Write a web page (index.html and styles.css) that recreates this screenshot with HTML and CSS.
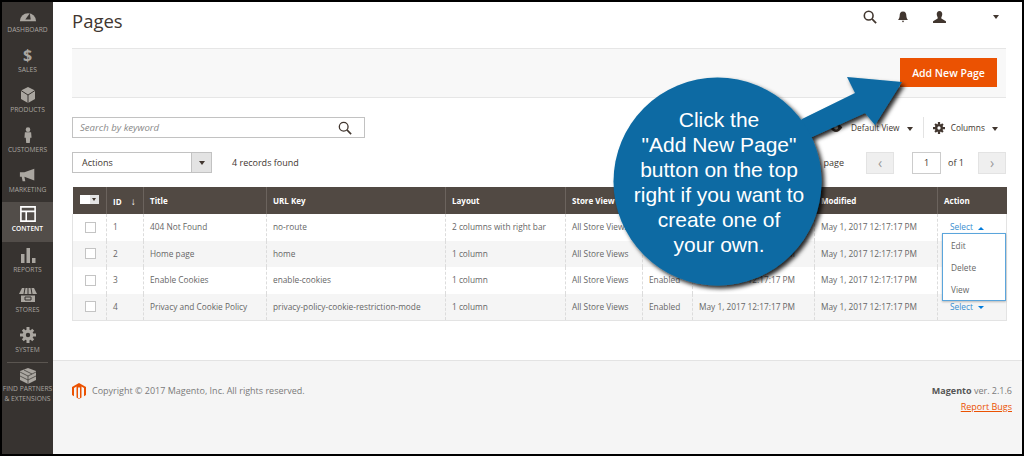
FILE: index.html
```html
<!DOCTYPE html>
<html lang="en">
<head>
<meta charset="utf-8">
<title>Pages</title>
<link rel="stylesheet" href="styles.css">
</head>
<body>
<div class="frame">
  <nav class="side">
    <a class="nav-item"><svg viewBox="0 0 20 16" class="ni"><path d="M1 15a9 9 0 1 1 18 0z" fill="#aaa6a0"/><path d="M7 13l5-7 1 7z" fill="#373330"/></svg><span>DASHBOARD</span></a>
    <a class="nav-item"><span class="dollar">$</span><span>SALES</span></a>
    <a class="nav-item"><svg viewBox="0 0 16 16" class="ni"><path d="M8 0l7 3.500v8.500l-7 4-7-4V3.500z" fill="#aaa6a0"/><path d="M8 8v8M1 3.500L8 8l7-4.500" stroke="#373330" fill="none"/></svg><span>PRODUCTS</span></a>
    <a class="nav-item"><svg viewBox="0 0 16 18" class="ni"><circle cx="8" cy="3" r="2.600" fill="#aaa6a0"/><path d="M4.500 6h7l.5 6h-1.500l-.5 6H6l-.5-6H4z" fill="#aaa6a0"/></svg><span>CUSTOMERS</span></a>
    <a class="nav-item"><svg viewBox="0 0 20 16" class="ni"><path d="M1 5h5l11-4v13L6 10l1 5H4L3 10H1z" fill="#aaa6a0"/></svg><span>MARKETING</span></a>
    <a class="nav-item active"><svg viewBox="0 0 18 18" class="ni"><path d="M1 1h16v16H1zM1 6h16M7 6v11" fill="none" stroke="#fff" stroke-width="1.800"/></svg><span>CONTENT</span></a>
    <a class="nav-item"><svg viewBox="0 0 16 16" class="ni"><path d="M1 7h3.500v9H1zM6.500 1H10v15H6.500zM12 11h3.500v5H12z" fill="#aaa6a0"/></svg><span>REPORTS</span></a>
    <a class="nav-item"><svg viewBox="0 0 18 16" class="ni"><path d="M3 1h12l3 6H0z" fill="#aaa6a0"/><path d="M2 8.500h14V15H2z" fill="#aaa6a0"/><path d="M6 1L5 7M9 1v6M12 1l1 6M6 10h6v3H6z" stroke="#373330" fill="none"/></svg><span>STORES</span></a>
    <a class="nav-item"><svg viewBox="0 0 16 16" class="ni"><circle cx="8" cy="8" r="3.800" fill="none" stroke="#aaa6a0" stroke-width="3.200"/><path d="M6.500 0h3v3h-3zM6.500 13h3v3h-3zM0 6.500h3v3H0zM13 6.500h3v3h-3zM1.800 3.800l2-2 2 2-2 2zM10.200 3.800l2-2 2 2-2 2zM1.800 12.200l2-2 2 2-2 2zM10.200 12.200l2-2 2 2-2 2z" fill="#aaa6a0"/></svg><span>SYSTEM</span></a>
    <a class="nav-item partners"><svg viewBox="0 0 16 16" class="ni"><path d="M8 0l8 3v9l-8 4-8-4V3z" fill="#aaa6a0"/><path d="M0 4l8 4 8-4M0 8l8 4 8-4M8 8v8M4 2l8 4" stroke="#373330" stroke-width=".7" fill="none"/></svg><span>FIND PARTNERS<br>&amp; EXTENSIONS</span></a>
  </nav>
  <div class="main">
    <main class="page">
      <header class="top">
        <h1>Pages</h1>
        <div class="tools">
          <svg class="t-search" viewBox="0 0 16 16"><circle cx="6.500" cy="6.500" r="5" fill="none" stroke="#41362f" stroke-width="1.800"/><path d="M10.200 10.200L15 15" stroke="#41362f" stroke-width="2"/></svg>
          <svg class="t-bell" viewBox="0 0 12 13"><path d="M6 0c3 0 4 2 4 5 0 2 1 4 2 5H0c1-1 2-3 2-5 0-3 1-5 4-5zM4.500 11h3L6 13z" fill="#41362f"/></svg>
          <svg class="t-user" viewBox="0 0 14 13"><path d="M7 0c2 0 3 1.500 3 3.500S8.500 7 9 8l5 3v2H0v-2l5-3c.500-1-1-2.500-1-4.500S5 0 7 0z" fill="#41362f"/></svg>
          <i class="caret"></i>
        </div>
      </header>
      <div class="actions-bar"><button class="primary">Add New Page</button></div>
      <div class="search-row">
        <div class="search"><em>Search by keyword</em><svg viewBox="0 0 16 16"><circle cx="6.500" cy="6.500" r="5" fill="none" stroke="#41362f" stroke-width="1.500"/><path d="M10.200 10.200L15 15" stroke="#41362f" stroke-width="1.800"/></svg></div>
        <div class="view-tools">
          <svg class="eye" viewBox="0 0 14 10"><path d="M0 5c2-3 4.500-5 7-5s5 2 7 5c-2 3-4.500 5-7 5S2 8 0 5z" fill="#41362f"/><circle cx="7" cy="5" r="2.300" fill="#fff"/></svg>
          <span class="view">Default View <i class="caret"></i></span>
          <span class="sep"></span>
          <svg class="gear" viewBox="0 0 16 16"><circle cx="8" cy="8" r="3.800" fill="none" stroke="#41362f" stroke-width="3.200"/><path d="M6.500 0h3v3h-3zM6.500 13h3v3h-3zM0 6.500h3v3H0zM13 6.500h3v3h-3zM1.800 3.800l2-2 2 2-2 2zM10.200 3.800l2-2 2 2-2 2zM1.800 12.200l2-2 2 2-2 2zM10.200 12.200l2-2 2 2-2 2z" fill="#41362f"/></svg>
          <span class="view">Columns <i class="caret"></i></span>
        </div>
      </div>
      <div class="action-row">
        <div class="select"><span>Actions</span><b><i class="caret"></i></b></div>
        <span class="records">4 records found</span>
        <div class="pager">
          <span class="per">page</span>
          <span class="pg-btn">&lsaquo;</span>
          <span class="pg-input">1</span>
          <span class="of">of 1</span>
          <span class="pg-btn">&rsaquo;</span>
        </div>
      </div>
      <div class="table-wrap">
        <table>
          <colgroup><col class="c1"><col class="c2"><col class="c3"><col class="c4"><col class="c5"><col class="c6"><col class="c7"><col class="c8"><col class="c9"><col class="c10"></colgroup>
          <thead>
            <tr>
              <th><span class="th-check"><u></u><b><i class="caret"></i></b></span></th>
              <th>ID <span class="arrow">&darr;</span></th><th>Title</th><th>URL Key</th><th>Layout</th><th>Store View</th><th>Status</th><th>Created</th><th>Modified</th><th>Action</th>
            </tr>
          </thead>
          <tbody>
            <tr><td><span class="cb"></span></td><td>1</td><td>404 Not Found</td><td>no-route</td><td>2 columns with right bar</td><td>All Store Views</td><td>Enabled</td><td>May 1, 2017 12:17:17 PM</td><td>May 1, 2017 12:17:17 PM</td>
              <td class="act"><a>Select <i class="up"></i></a>
                <div class="menu"><span>Edit</span><span>Delete</span><span>View</span></div></td></tr>
            <tr><td><span class="cb"></span></td><td>2</td><td>Home page</td><td>home</td><td>1 column</td><td>All Store Views</td><td>Enabled</td><td>May 1, 2017 12:17:17 PM</td><td>May 1, 2017 12:17:17 PM</td><td></td></tr>
            <tr><td><span class="cb"></span></td><td>3</td><td>Enable Cookies</td><td>enable-cookies</td><td>1 column</td><td>All Store Views</td><td>Enabled</td><td>May 1, 2017 12:17:17 PM</td><td>May 1, 2017 12:17:17 PM</td><td></td></tr>
            <tr><td><span class="cb"></span></td><td>4</td><td>Privacy and Cookie Policy</td><td>privacy-policy-cookie-restriction-mode</td><td>1 column</td><td>All Store Views</td><td>Enabled</td><td>May 1, 2017 12:17:17 PM</td><td>May 1, 2017 12:17:17 PM</td><td class="act"><a>Select <i class="down"></i></a></td></tr>
          </tbody>
        </table>
      </div>
    </main>
    <footer class="foot">
      <div class="copy">
        <svg viewBox="0 0 14 16"><path d="M7 0l7 4v8l-2 1.200V5L9.500 3.600V14.500L7 16l-2.500-1.500V3.600L2 5v8.200L0 12V4z" fill="#eb5202"/><path d="M6 4.500h2v10.300L7 15.400 6 14.800z" fill="#f5f5f5"/></svg>
        <span>Copyright &copy; 2017 Magento, Inc. All rights reserved.</span>
      </div>
      <div class="ver"><div><b>Magento</b> ver. 2.1.6</div><a>Report Bugs</a></div>
    </footer>
  </div>
  <div class="callout">
    <svg viewBox="0 0 1024 456" class="callout-art">
      <defs><filter id="sh" x="-20%" y="-20%" width="140%" height="140%"><feDropShadow dx="3" dy="3" stdDeviation="2" flood-color="#000" flood-opacity=".85"/></filter></defs>
      <g filter="url(#sh)" fill="#0a6aa3">
        <path d="M802 119L855 93 847 77 902 82 875 125 865 113 812 137 760 175z"/>
        <circle cx="717.500" cy="181.500" r="104"/>
      </g>
    </svg>
    <p class="callout-text">Click the<br>"Add New Page"<br>button on the top<br>right if you want to<br>create one of<br>your own.</p>
  </div>
</div>
</body>
</html>
```
FILE: styles.css
```css
* { box-sizing: border-box; }
html, body { margin: 0; padding: 0; background: #000; }
body { width: 1024px; height: 456px; overflow: hidden; font-family: "Open Sans", "Liberation Sans", sans-serif; color: #41362f; }
.frame { position: relative; display: flex; width: 1024px; height: 456px; padding: 2px; background: #000; overflow: hidden; }

.side { width: 51px; flex: none; background: #373330; display: flex; flex-direction: column; padding-top: 2px; }
.nav-item { height: 40px; flex: none; display: flex; flex-direction: column; align-items: center; justify-content: flex-start; color: #aaa6a0; font-size: 6.700px; line-height: 9px; text-align: center; white-space: nowrap; padding-top: 3px; gap: 2px; }
.nav-item.active { background: #524d49; color: #fff; font-weight: 600; height: 40px; margin: -2px 0 2px; padding-top: 4px; }
.ni { width: 18px; height: 16px; display: block; flex: none; }
.dollar { font-size: 16px; font-weight: 700; line-height: 16px; color: #aaa6a0; }
.partners { border-top: 1px solid #5a5550; margin: -2px 5px 0; height: 56px; padding-top: 5px; gap: 0; line-height: 10px; }

.main { flex: 1; min-width: 0; background: #fff; display: flex; flex-direction: column; }
.page { padding: 0 16px 0 19px; height: 358px; flex: none; }
.top { height: 46px; display: flex; align-items: flex-start; justify-content: space-between; }
h1 { margin: 4px 0 0; font-size: 18.500px; line-height: 30px; font-weight: 400; color: #41362f; }
.tools { display: flex; align-items: center; height: 30px; }
.t-search { width: 14px; height: 14px; margin-right: 21px; }
.t-bell { width: 10px; height: 12px; margin-right: 25px; }
.t-user { width: 13px; height: 12px; margin-right: 47px; }
.caret { display: inline-block; width: 0; height: 0; border-left: 3px solid transparent; border-right: 3px solid transparent; border-top: 4px solid #41362f; vertical-align: middle; }
.tools .caret { margin-right: 7px; }

.actions-bar { height: 50px; background: #f8f8f8; border-top: 1px solid #e6e6e6; border-bottom: 1px solid #e6e6e6; display: flex; justify-content: flex-end; align-items: center; padding: 0 9px 1px 0; }
.primary { width: 97px; height: 29px; background: #eb5202; border: 0; color: #fff; font: 600 10.500px "Open Sans", sans-serif; padding: 0; }

.search-row { display: flex; justify-content: space-between; align-items: center; height: 21px; margin-top: 19px; }
.search { width: 293px; height: 21px; border: 1px solid #c2c2c2; display: flex; align-items: center; justify-content: space-between; padding: 0 12px 0 7px; font-size: 9.600px; color: #8a8a8a; background: #fff; }
.search svg { width: 14px; height: 14px; }
.view-tools { display: flex; align-items: center; font-size: 8.300px; color: #41362f; padding-right: 8px; }
.view { white-space: nowrap; }
.view .caret { margin-left: 5px; }
.eye { width: 14px; height: 9px; margin-right: 8px; }
.sep { width: 1px; height: 21px; background: #e3e3e3; margin: 0 9px 0 10px; }
.gear { width: 12px; height: 12px; margin-right: 6px; }

.action-row { display: flex; align-items: center; height: 21px; margin-top: 14px; font-size: 9px; }
.select { width: 140px; height: 21px; border: 1px solid #c2c2c2; display: flex; justify-content: space-between; align-items: center; padding-left: 9px; color: #41362f; }
.select b { width: 20px; height: 19px; background: #e3e3e3; border-left: 1px solid #c2c2c2; display: flex; align-items: center; justify-content: center; }
.records { margin-left: 20px; }
.pager { margin-left: auto; display: flex; align-items: center; }
.per { margin-right: 22px; }
.pg-btn { width: 28px; height: 22px; background: #efefef; border: 1px solid #e3e3e3; color: #9a9a9a; display: flex; align-items: center; justify-content: center; font-size: 14px; }
.pg-input { width: 29px; height: 22px; border: 1px solid #ccc; display: flex; align-items: center; justify-content: center; margin: 0 7px 0 18px; }
.of { margin-right: 14px; }

.table-wrap { margin-top: 14px; }
table { border-collapse: collapse; table-layout: fixed; width: 934px; font-size: 8.300px; }
.c1 { width: 34px; } .c2 { width: 37px; } .c3 { width: 123px; } .c4 { width: 179px; } .c5 { width: 120px; }
.c6 { width: 77px; } .c7 { width: 50px; } .c8 { width: 122px; } .c9 { width: 123px; } .c10 { width: 69px; }
th { height: 27px; background: #514943; color: #fff; font-size: 8px; font-weight: 700; text-align: left; padding: 0 6px; border-left: 1px solid #6b635d; white-space: nowrap; }
th:first-child { border-left: 0; }
.arrow { margin-left: 7px; font-size: 10px; font-weight: 400; }
.th-check { display: inline-flex; align-items: center; margin-left: 1px; }
.th-check u { width: 10px; height: 9px; background: #fff; display: block; }
.th-check b { width: 9px; height: 9px; background: #e3e3e3; display: flex; align-items: center; justify-content: center; }
.th-check .caret { border-left-width: 2px; border-right-width: 2px; border-top-width: 3px; }
td { height: 26.500px; padding: 0 6px 1px; border-left: 1px dashed #dcdcdc; color: #666; white-space: nowrap; overflow: visible; background: #fff; }
td:first-child { border-left: 1px solid #e3e3e3; padding: 0 0 0 12px; }
td:last-child { border-right: 1px solid #e3e3e3; }
tbody tr:nth-child(even) td { background: #f5f5f5; }
tbody tr:last-child td { border-bottom: 1px solid #e3e3e3; }
.cb { display: block; width: 11px; height: 11px; border: 1px solid #c4c4c4; background: #fff; }
.act { position: relative; }
.act a { color: #3a8ed0; margin-left: 6px; }
.up, .down { display: inline-block; width: 0; height: 0; border-left: 3px solid transparent; border-right: 3px solid transparent; margin-left: 3px; vertical-align: middle; }
.up { border-bottom: 3px solid #007bdb; }
.down { border-top: 3px solid #007bdb; }
.menu { position: absolute; left: 4px; top: 19px; width: 64px; height: 68px; background: #fff; border: 1px solid #5aa5dc; box-shadow: 0 1px 2px rgba(0,0,0,.25); display: flex; flex-direction: column; justify-content: space-around; padding: 0 8px; z-index: 2; }

.foot { flex: 1; border-top: 1px solid #e3e3e3; background: #f5f5f5; display: flex; justify-content: space-between; padding: 22px 10px 0 19px; font-size: 9px; color: #7a7a7a; }
.copy { display: flex; align-items: flex-start; gap: 6px; }
.copy svg { width: 14px; height: 16px; }
.copy span { line-height: 15px; }
.ver { text-align: right; line-height: 15px; }
.ver b { color: #555; }
.ver a { display: block; color: #eb5202; text-decoration: underline; margin-top: 1px; }

.callout { position: absolute; left: 0; top: 0; width: 1024px; height: 456px; z-index: 5; pointer-events: none; }
.callout-art { position: absolute; left: 0; top: 0; width: 1024px; height: 456px; }
.callout-text { position: absolute; left: 613px; top: 107px; width: 212px; margin: 0; text-align: center; color: #fff; font: 21px/25px "Liberation Sans", Arial, sans-serif; }
```
